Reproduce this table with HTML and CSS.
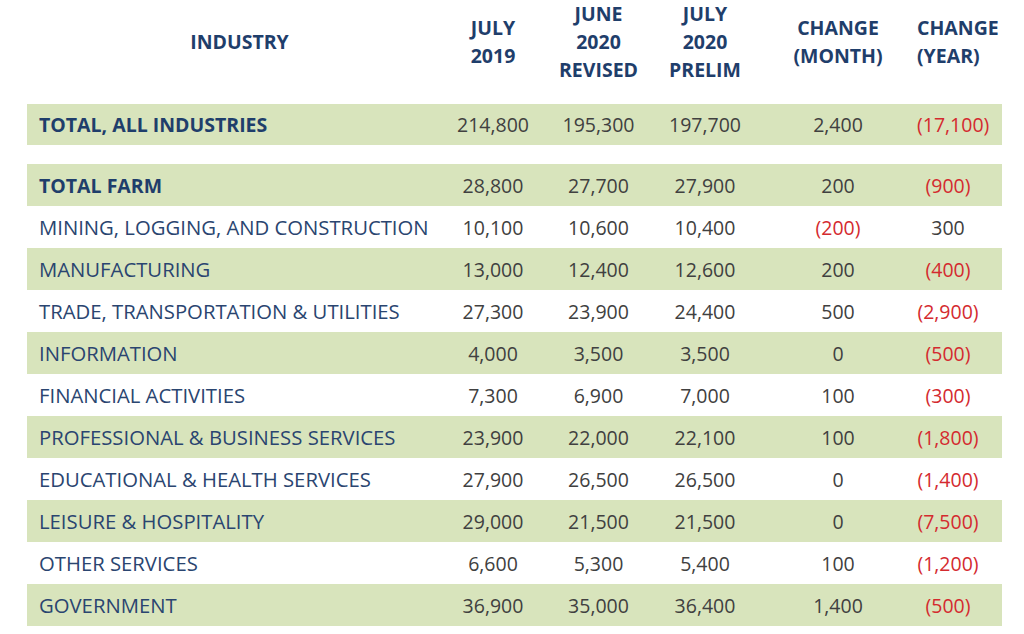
FILE: index.html
```html
<!DOCTYPE html>
<html>
<head>
<meta charset="utf-8">
<link rel="stylesheet" href="styles.css">
</head>
<body>
<div class="sheet">
  <div class="row head">
    <div class="label hl">INDUSTRY</div>
    <div class="cell">JULY<br>2019</div>
    <div class="cell">JUNE<br>2020<br>REVISED</div>
    <div class="cell">JULY<br>2020<br>PRELIM</div>
    <div class="cell">CHANGE<br>(MONTH)</div>
    <div class="cell">CHANGE<br>(YEAR)</div>
  </div>

  <div class="row band total">
    <div class="label strong">TOTAL, ALL INDUSTRIES</div>
    <div class="cell">214,800</div>
    <div class="cell">195,300</div>
    <div class="cell">197,700</div>
    <div class="cell">2,400</div>
    <div class="cell neg">(17,100)</div>
  </div>

  <div class="group">
    <div class="row band">
      <div class="label strong">TOTAL FARM</div>
      <div class="cell">28,800</div>
      <div class="cell">27,700</div>
      <div class="cell">27,900</div>
      <div class="cell">200</div>
      <div class="cell neg">(900)</div>
    </div>
    <div class="row">
      <div class="label">MINING, LOGGING, AND CONSTRUCTION</div>
      <div class="cell">10,100</div>
      <div class="cell">10,600</div>
      <div class="cell">10,400</div>
      <div class="cell neg">(200)</div>
      <div class="cell">300</div>
    </div>
    <div class="row band">
      <div class="label">MANUFACTURING</div>
      <div class="cell">13,000</div>
      <div class="cell">12,400</div>
      <div class="cell">12,600</div>
      <div class="cell">200</div>
      <div class="cell neg">(400)</div>
    </div>
    <div class="row">
      <div class="label">TRADE, TRANSPORTATION &amp; UTILITIES</div>
      <div class="cell">27,300</div>
      <div class="cell">23,900</div>
      <div class="cell">24,400</div>
      <div class="cell">500</div>
      <div class="cell neg">(2,900)</div>
    </div>
    <div class="row band">
      <div class="label">INFORMATION</div>
      <div class="cell">4,000</div>
      <div class="cell">3,500</div>
      <div class="cell">3,500</div>
      <div class="cell">0</div>
      <div class="cell neg">(500)</div>
    </div>
    <div class="row">
      <div class="label">FINANCIAL ACTIVITIES</div>
      <div class="cell">7,300</div>
      <div class="cell">6,900</div>
      <div class="cell">7,000</div>
      <div class="cell">100</div>
      <div class="cell neg">(300)</div>
    </div>
    <div class="row band">
      <div class="label">PROFESSIONAL &amp; BUSINESS SERVICES</div>
      <div class="cell">23,900</div>
      <div class="cell">22,000</div>
      <div class="cell">22,100</div>
      <div class="cell">100</div>
      <div class="cell neg">(1,800)</div>
    </div>
    <div class="row">
      <div class="label">EDUCATIONAL &amp; HEALTH SERVICES</div>
      <div class="cell">27,900</div>
      <div class="cell">26,500</div>
      <div class="cell">26,500</div>
      <div class="cell">0</div>
      <div class="cell neg">(1,400)</div>
    </div>
    <div class="row band">
      <div class="label">LEISURE &amp; HOSPITALITY</div>
      <div class="cell">29,000</div>
      <div class="cell">21,500</div>
      <div class="cell">21,500</div>
      <div class="cell">0</div>
      <div class="cell neg">(7,500)</div>
    </div>
    <div class="row">
      <div class="label">OTHER SERVICES</div>
      <div class="cell">6,600</div>
      <div class="cell">5,300</div>
      <div class="cell">5,400</div>
      <div class="cell">100</div>
      <div class="cell neg">(1,200)</div>
    </div>
    <div class="row band">
      <div class="label">GOVERNMENT</div>
      <div class="cell">36,900</div>
      <div class="cell">35,000</div>
      <div class="cell">36,400</div>
      <div class="cell">1,400</div>
      <div class="cell neg">(500)</div>
    </div>
  </div>
</div>
</body>
</html>
```
FILE: styles.css
```css
html, body {
  margin: 0;
  padding: 0;
  background: #ffffff;
}
body {
  font-family: "Open Sans", "Noto Sans", sans-serif;
  font-size: 19.5px;
  color: #404040;
}
.sheet {
  width: 975px;
  margin-left: 27px;
  display: flex;
  flex-direction: column;
}
.row {
  display: grid;
  grid-template-columns: 413px 106px 105px 108px 158px 62px;
  padding-right: 23px;
  height: 42px;
  align-items: center;
}
.band {
  background: #d8e4bc;
}
.label {
  padding-left: 12px;
  color: #2a4570;
  white-space: nowrap;
  font-size: 20.3px;
}
.strong {
  font-weight: 700;
  color: #1f3e6b;
  font-size: 19.5px;
}
.cell {
  text-align: center;
  white-space: nowrap;
}
.neg {
  color: #d42a2f;
}
.head {
  height: 84px;
  font-weight: 700;
  color: #1f3e6b;
  line-height: 28px;
  margin-bottom: 20px;
}
.head .label {
  text-align: center;
  color: #1f3e6b;
  font-size: 19.5px;
}
.total {
  height: 41px;
  margin-bottom: 19px;
}
```
